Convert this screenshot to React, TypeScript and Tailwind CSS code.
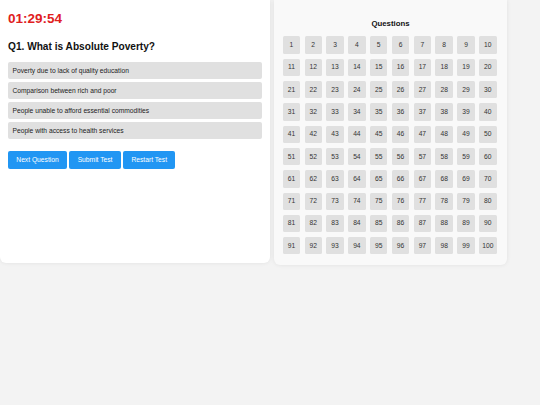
import React from "react";

const options = [
  "Poverty due to lack of quality education",
  "Comparison between rich and poor",
  "People unable to afford essential commodities",
  "People with access to health services",
];

const buttons = ["Next Question", "Submit Test", "Restart Test"];

export default function App() {
  const nums = Array.from({ length: 100 }, (_, i) => i + 1);
  return (
    <div
      className="w-[540px] h-[405px] bg-[#f3f3f3] flex items-start overflow-hidden"
      style={{ fontFamily: '"Liberation Sans", Arial, sans-serif' }}
    >
      <div className="w-[270px] h-[263px] bg-white rounded-b-[6px] shadow-[0_0_4px_rgba(0,0,0,0.08)] px-[8px] flex flex-col">
        <div className="mt-[11.5px] text-[13.5px] leading-none font-bold text-[#e0201e]">
          01:29:54
        </div>
        <div className="mt-[16.7px] text-[10.15px] leading-none font-bold text-[#111]">
          Q1. What is Absolute Poverty?
        </div>
        <div className="mt-[10.6px] flex flex-col gap-[3.3px]">
          {options.map((o) => (
            <div
              key={o}
              className="h-[16.7px] bg-[#e0e0e0] rounded-[2px] pl-[4.5px] flex items-center text-[6.7px] text-[#222]"
            >
              {o}
            </div>
          ))}
        </div>
        <div className="mt-[12.4px] flex gap-[2.4px]">
          {buttons.map((b) => (
            <div
              key={b}
              className="h-[17.6px] px-[8.3px] bg-[#2196f3] rounded-[2px] flex items-center text-[6.7px] text-white"
            >
              {b}
            </div>
          ))}
        </div>
      </div>
      <div className="ml-[4px] w-[233px] h-[264.5px] bg-[#f9f9f9] rounded-b-[6px] shadow-[0_0_4px_rgba(0,0,0,0.08)] px-[8.7px] flex flex-col">
        <div className="mt-[19.7px] text-[7.8px] leading-none font-bold text-[#111] text-center">
          Questions
        </div>
        <div className="mt-[9px] grid grid-cols-[repeat(10,17.4px)] auto-rows-[17.3px] gap-x-[4.45px] gap-y-[5px]">
          {nums.map((n) => (
            <div
              key={n}
              className="bg-[#e0e0e0] rounded-[1.5px] flex items-center justify-center text-[6.7px] text-[#333]"
            >
              {n}
            </div>
          ))}
        </div>
      </div>
    </div>
  );
}
